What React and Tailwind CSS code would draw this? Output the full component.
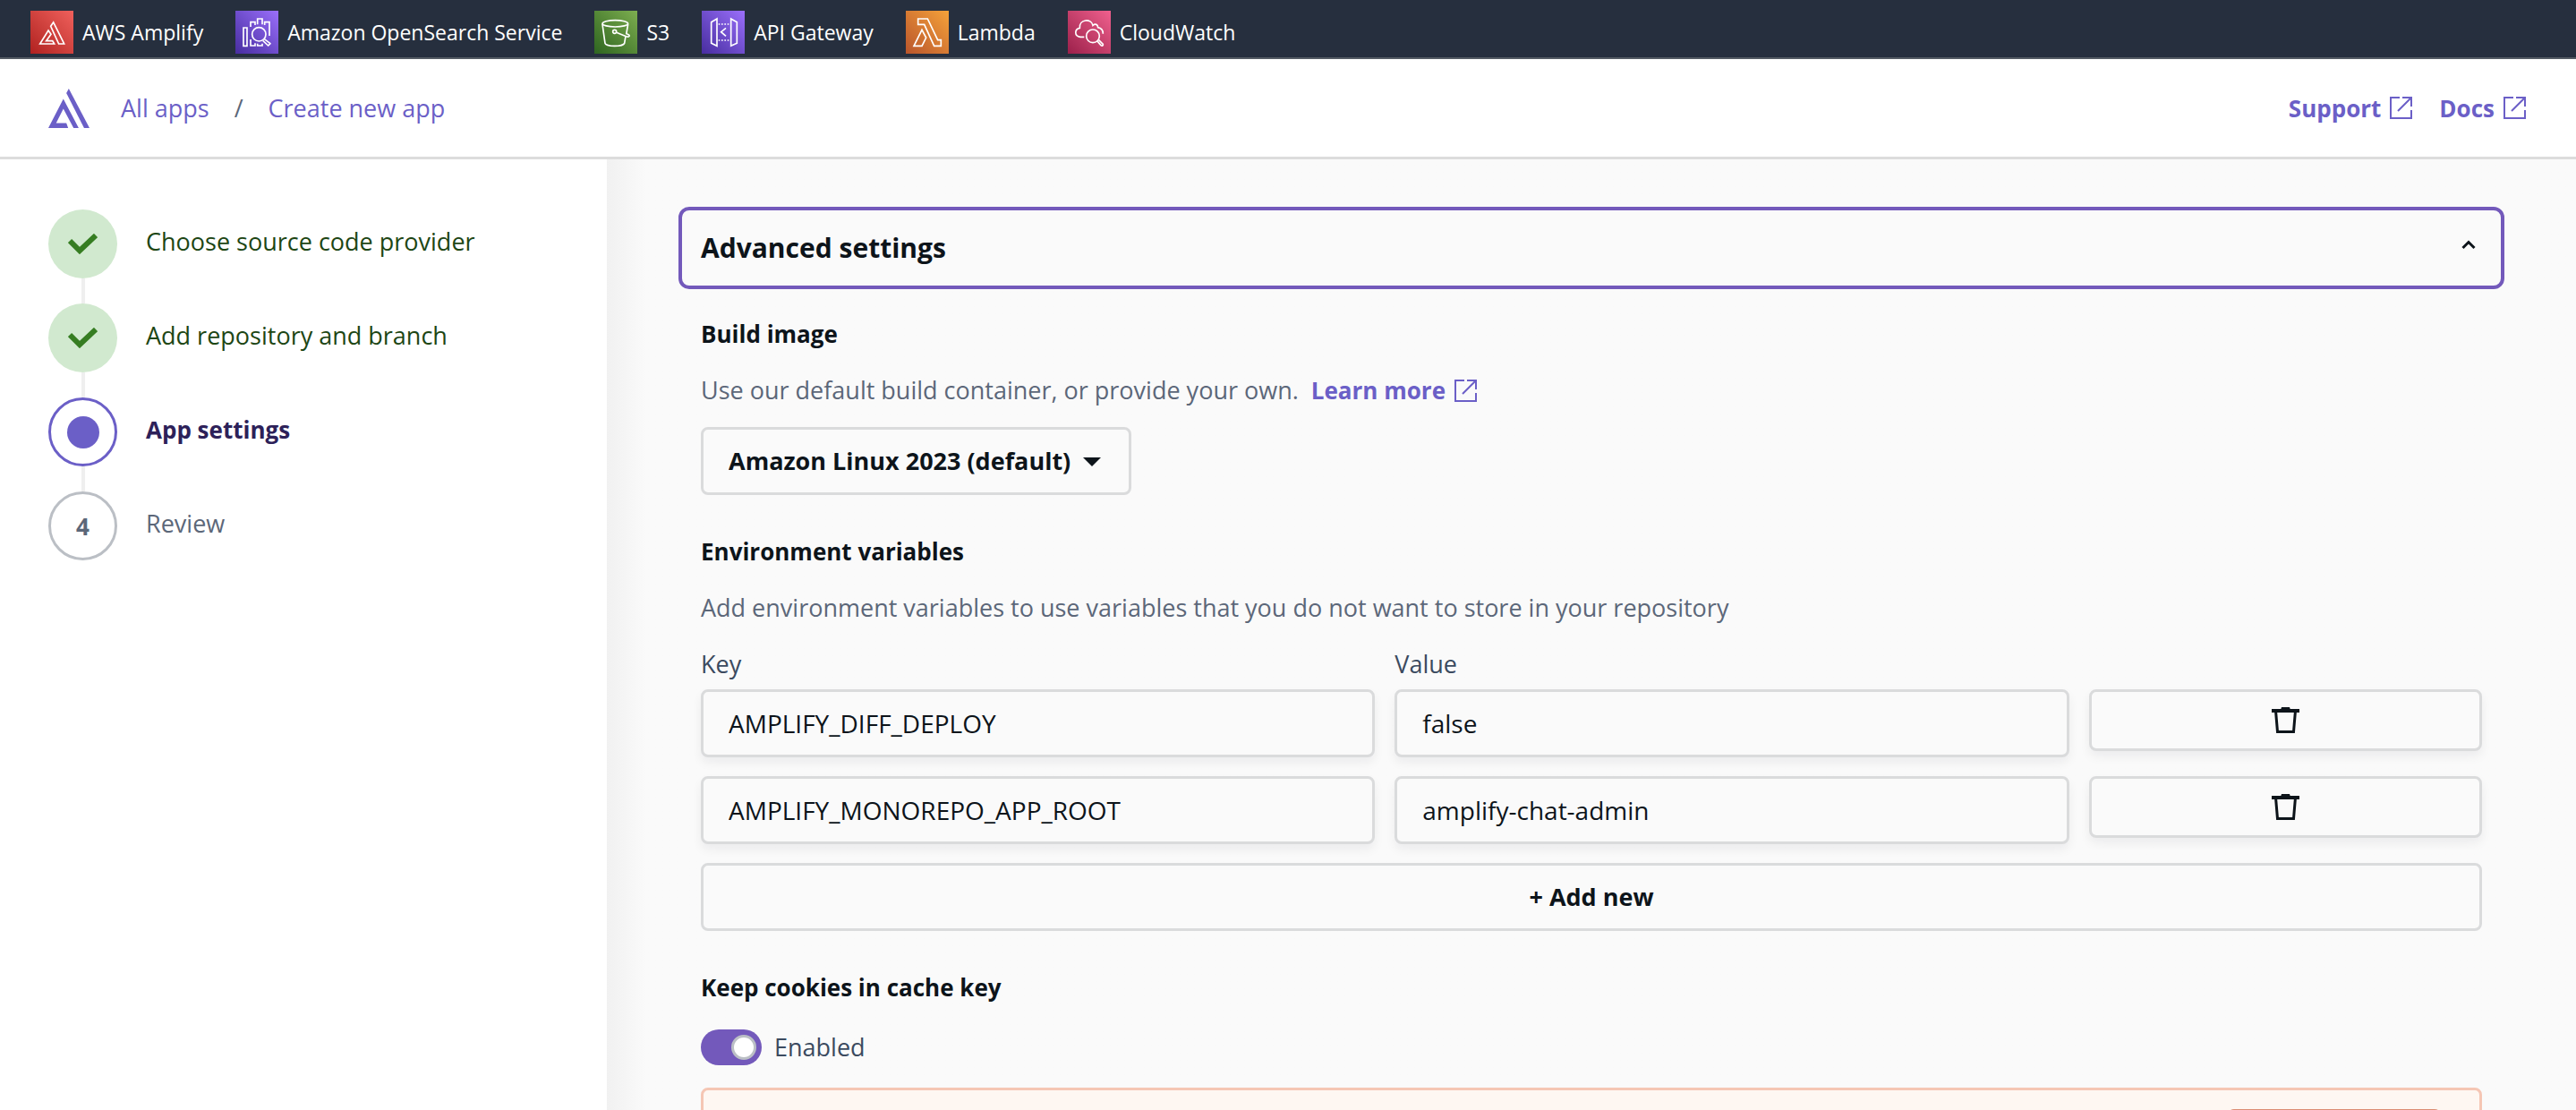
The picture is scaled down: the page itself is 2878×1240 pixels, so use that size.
const services = [
  { name: "AWS Amplify", tile: "bg-linear-to-tr from-[#b0201f] to-[#f0605c]", Icon: AmplifyGlyph },
  { name: "Amazon OpenSearch Service", tile: "bg-linear-to-tr from-[#482da0] to-[#9b6ffb]", Icon: OpenSearchGlyph },
  { name: "S3", tile: "bg-linear-to-tr from-[#2e6520] to-[#7dae50]", Icon: BucketGlyph },
  { name: "API Gateway", tile: "bg-linear-to-tr from-[#482da0] to-[#9b6ffb]", Icon: GatewayGlyph },
  { name: "Lambda", tile: "bg-linear-to-tr from-[#b9552b] to-[#f5a23a]", Icon: LambdaGlyph },
  { name: "CloudWatch", tile: "bg-linear-to-tr from-[#9c1f4b] to-[#f0608e]", Icon: CloudWatchGlyph },
];

const steps = [
  { label: "Choose source code provider", state: "done" },
  { label: "Add repository and branch", state: "done" },
  { label: "App settings", state: "current" },
  { label: "Review", state: "todo" },
];

const variables = [
  { name: "AMPLIFY_DIFF_DEPLOY", value: "false" },
  { name: "AMPLIFY_MONOREPO_APP_ROOT", value: "amplify-chat-admin" },
];

function Glyph({ children }) {
  return (
    <svg viewBox="0 0 144 144" className="size-12" fill="none" stroke="#fff" strokeWidth="5" aria-hidden="true">
      {children}
    </svg>
  );
}

function AmplifyGlyph() {
  return (
    <Glyph>
      <path d="M32 111 60 66l9 13-16 22h21l6 10Z" />
      <path d="M68 52 77 39l36 72H95Z" />
    </Glyph>
  );
}

function OpenSearchGlyph() {
  return (
    <Glyph>
      <path d="M27 57h12v61H27Z" />
      <path d="M51 54V38h15v10M74 46V27h16v19M98 48V38h16v46M51 96v21h15v-8M74 110v7h16v-7" />
      <circle cx="79" cy="79" r="23" />
      <path d="m97 95 20 15-7 7-18-17" strokeLinejoin="round" />
    </Glyph>
  );
}

function BucketGlyph() {
  return (
    <Glyph>
      <ellipse cx="70" cy="43" rx="43" ry="11" />
      <path d="M27 45l9 64c1 5 16 9 32 9s31-4 33-9l4-24M113 45l-6 34" />
      <circle cx="68" cy="70" r="6" />
      <path d="m74 73 33 13c8 3 12 0 10-4l-8-5" />
    </Glyph>
  );
}

function GatewayGlyph() {
  return (
    <Glyph>
      <path d="m32 38 19-11v91l-19-9ZM98 27l20 11v71l-20 9ZM81 58 65 71l16 14" />
      <path d="M56 45h40M56 99h40" strokeDasharray="5 5" />
    </Glyph>
  );
}

function LambdaGlyph() {
  return (
    <Glyph>
      <path d="M41 27h32l34 71h11v20H95L62 46H41Z" />
      <path d="m27 118 27-54 14 26-14 28Z" />
    </Glyph>
  );
}

function CloudWatchGlyph() {
  return (
    <Glyph>
      <path d="M55 88H42c-21-3-20-26-2-30-3-30 39-34 44-9 8-7 17-3 17 7 11 2 17 8 17 21" />
      <circle cx="84" cy="85" r="22" />
      <path d="m103 97 15 15c1 5-3 7-7 4l-13-15" />
    </Glyph>
  );
}

function AmplifyLogo() {
  return (
    <svg viewBox="0 0 137 131" className="h-11 w-[46px]" fill="#6b5fc7" aria-hidden="true">
      <path d="M0 131 50 34l51 97H84L50 67 26 115h34l6 16Z" />
      <path d="M60 15 68 0l69 131h-18Z" />
    </svg>
  );
}

function ExternalIcon() {
  return (
    <svg viewBox="0 0 25 25" className="size-[25px] shrink-0" fill="none" stroke="currentColor" strokeWidth="2" aria-hidden="true">
      <path d="M11 1H1v23h23V15M14 1h10v10M24 1 9 16" />
    </svg>
  );
}

function ExternalLink({ children }) {
  return (
    <a href="#" className="inline-flex items-center gap-2.5 text-[26px] leading-10 font-bold text-[#6b5fc7]">
      {children}
      <ExternalIcon />
    </a>
  );
}

function TrashIcon() {
  return (
    <svg viewBox="0 0 31 29" className="h-[29px] w-[31px]" fill="#0d141a" aria-hidden="true">
      <path d="M11 0h9l1 3H10Z" />
      <path d="M0 2h31v4H0Z" />
      <path d="M4.5 4l2 23.5h18l2-23.5" fill="none" stroke="#0d141a" strokeWidth="3" />
    </svg>
  );
}

function StepMarker({ state, number }) {
  if (state === "done")
    return (
      <span className="flex size-[77px] items-center justify-center rounded-full bg-[#d1e9cf]">
        <svg viewBox="0 0 33 23" className="h-[23px] w-[33px]" fill="none" stroke="#367d22" strokeWidth="6" aria-hidden="true">
          <path d="M2 8 13 19 31 2" />
        </svg>
      </span>
    );
  if (state === "current")
    return (
      <span className="flex size-[77px] items-center justify-center rounded-full border-3 border-[#6b5fc7]">
        <span className="size-9 rounded-full bg-[#6b5fc7]" />
      </span>
    );
  return (
    <span className="flex size-[77px] items-center justify-center rounded-full border-3 border-[#bbbfc5] text-[26px] font-bold text-[#5c6779]">
      {number}
    </span>
  );
}

const labelTone = {
  done: "text-[#1d4614]",
  current: "text-[26px] leading-10 font-bold text-[#2d2159]",
  todo: "text-[#5c6779]",
};

const box = "rounded-lg border-3 border-[#dadbdc] bg-[#fafafa]";
const raised = "shadow-[0_6px_12px_rgba(13,20,26,0.06)]";

function SectionTitle({ children }) {
  return <h2 className="text-[26px] leading-10 font-bold">{children}</h2>;
}

function Field({ label, showLabel, value }) {
  return (
    <label className="block text-[#3b4a5f]">
      {showLabel && <span className="mb-2 block">{label}</span>}
      <input
        aria-label={label}
        defaultValue={value}
        className={`block h-[76px] w-full min-w-0 px-7 text-[28px] text-[#0d141a] ${raised} ${box}`}
      />
    </label>
  );
}

export default function App() {
  return (
    <div className="flex h-screen flex-col overflow-hidden bg-white font-['Open_Sans',sans-serif] text-[27px] leading-10 text-[#0d141a]">
      <nav aria-label="Favorite services" className="flex shrink-0 items-center gap-9 border-b-2 border-[#545b64] bg-[#262f3e] px-[34px] pt-3 pb-1 text-[23px] text-white">
        {services.map(({ name, tile, Icon }) => (
          <a key={name} href="#" className="flex items-center gap-2.5">
            <span className={`size-12 ${tile}`}>
              <Icon />
            </span>
            {name}
          </a>
        ))}
      </nav>

      <header className="flex h-28 shrink-0 items-center justify-between border-b-3 border-[#dcdcdc] pr-14 pl-[54px]">
        <div className="flex items-center gap-[35px]">
          <a href="#" aria-label="Amplify home">
            <AmplifyLogo />
          </a>
          <div className="flex items-center gap-7">
            <a href="#" className="text-[#6b5fc7]">All apps</a>
            <span className="text-[#5c6779]">/</span>
            <a href="#" className="text-[#6b5fc7]">Create new app</a>
          </div>
        </div>
        <div className="flex items-center gap-[30px]">
          <ExternalLink>Support</ExternalLink>
          <ExternalLink>Docs</ExternalLink>
        </div>
      </header>

      <div className="flex min-h-0 grow">
        <aside className="w-[678px] shrink-0 px-[54px] pt-14">
          <ol>
            {steps.map((step, i) => (
              <li key={step.label} className="flex gap-8">
                <div className="flex flex-col items-center">
                  <StepMarker state={step.state} number={i + 1} />
                  {i < steps.length - 1 && <span className="h-7 w-1 bg-[#efefef]" />}
                </div>
                <span className={`pt-4 ${labelTone[step.state]}`}>{step.label}</span>
              </li>
            ))}
          </ol>
        </aside>

        <main className="min-w-0 grow bg-[#fafafa] bg-linear-to-r from-[#f1f1f1] to-[#fafafa] to-[44px] px-20 pt-[53px]">
          <button
            type="button"
            aria-expanded="true"
            className="flex h-[92px] w-full items-center justify-between rounded-xl border-4 border-[#7359bb] bg-[#fafafa] pr-7 pl-[21px] text-[30px] font-bold"
          >
            Advanced settings
            <svg viewBox="0 0 16 20" className="h-5 w-4" fill="none" stroke="#0d141a" strokeWidth="3" aria-hidden="true">
              <path d="m1.5 10 6.5-6.5 6.5 6.5" />
            </svg>
          </button>

          <div className="px-[25px]">
            <section className="pt-[30px]">
              <SectionTitle>Build image</SectionTitle>
              <p className="mt-[23px] flex gap-3.5 text-[#5c6779]">
                Use our default build container, or provide your own.
                <ExternalLink>Learn more</ExternalLink>
              </p>
              <div className="relative mt-[21px] w-[481px]">
                <select aria-label="Build image" className={`h-[76px] w-full appearance-none px-7 font-bold ${box}`}>
                  <option>Amazon Linux 2023 (default)</option>
                </select>
                <svg viewBox="0 0 20 10" className="pointer-events-none absolute top-[34px] right-[34px] h-2.5 w-5" fill="#0d141a" aria-hidden="true">
                  <path d="M0 0h20L10 10Z" />
                </svg>
              </div>
            </section>

            <section className="pt-[43px]">
              <SectionTitle>Environment variables</SectionTitle>
              <p className="mt-[23px] text-[#5c6779]">
                Add environment variables to use variables that you do not want to store in your repository
              </p>
              <div className="mt-[23px] grid grid-cols-[12fr_12fr_7fr] gap-x-[22px] gap-y-[21px]">
                {variables.map(({ name, value }, i) => (
                  <Row key={name} name={name} value={value} first={i === 0} />
                ))}
              </div>
              <button type="button" className={`mt-[21px] h-[76px] w-full font-bold ${box}`}>
                + Add new
              </button>
            </section>

            <section className="pt-[43px]">
              <SectionTitle>Keep cookies in cache key</SectionTitle>
              <label className="mt-[27px] flex w-fit items-center gap-3.5 text-[#3b4a5f]">
                <span className="relative flex h-10 w-[68px] items-center justify-end rounded-full bg-[#7359bb] px-1.5">
                  <input type="checkbox" role="switch" defaultChecked className="absolute inset-0 size-full appearance-none rounded-full" />
                  <span className="size-7 rounded-full border-3 border-[#bbbfc5] bg-white" />
                </span>
                Enabled
              </label>
              <div role="status" className="mt-[25px] flex justify-end rounded-lg border-3 border-[#f5c6b4] bg-[#fef7f2] px-[42px] pt-[21px] pb-6">
                <button type="button" aria-label="Enable cookies" className="h-[76px] w-60 rounded-lg border-3 border-[#dc8d73]" />
              </div>
            </section>
          </div>
        </main>
      </div>
    </div>
  );
}

function Row({ name, value, first }) {
  return (
    <>
      <Field label="Key" showLabel={first} value={name} />
      <Field label="Value" showLabel={first} value={value} />
      <div className={first ? "pt-12" : ""}>
        <button
          type="button"
          aria-label={`Remove ${name}`}
          className={`flex h-[69px] w-full items-center justify-center ${raised} ${box}`}
        >
          <TrashIcon />
        </button>
      </div>
    </>
  );
}
